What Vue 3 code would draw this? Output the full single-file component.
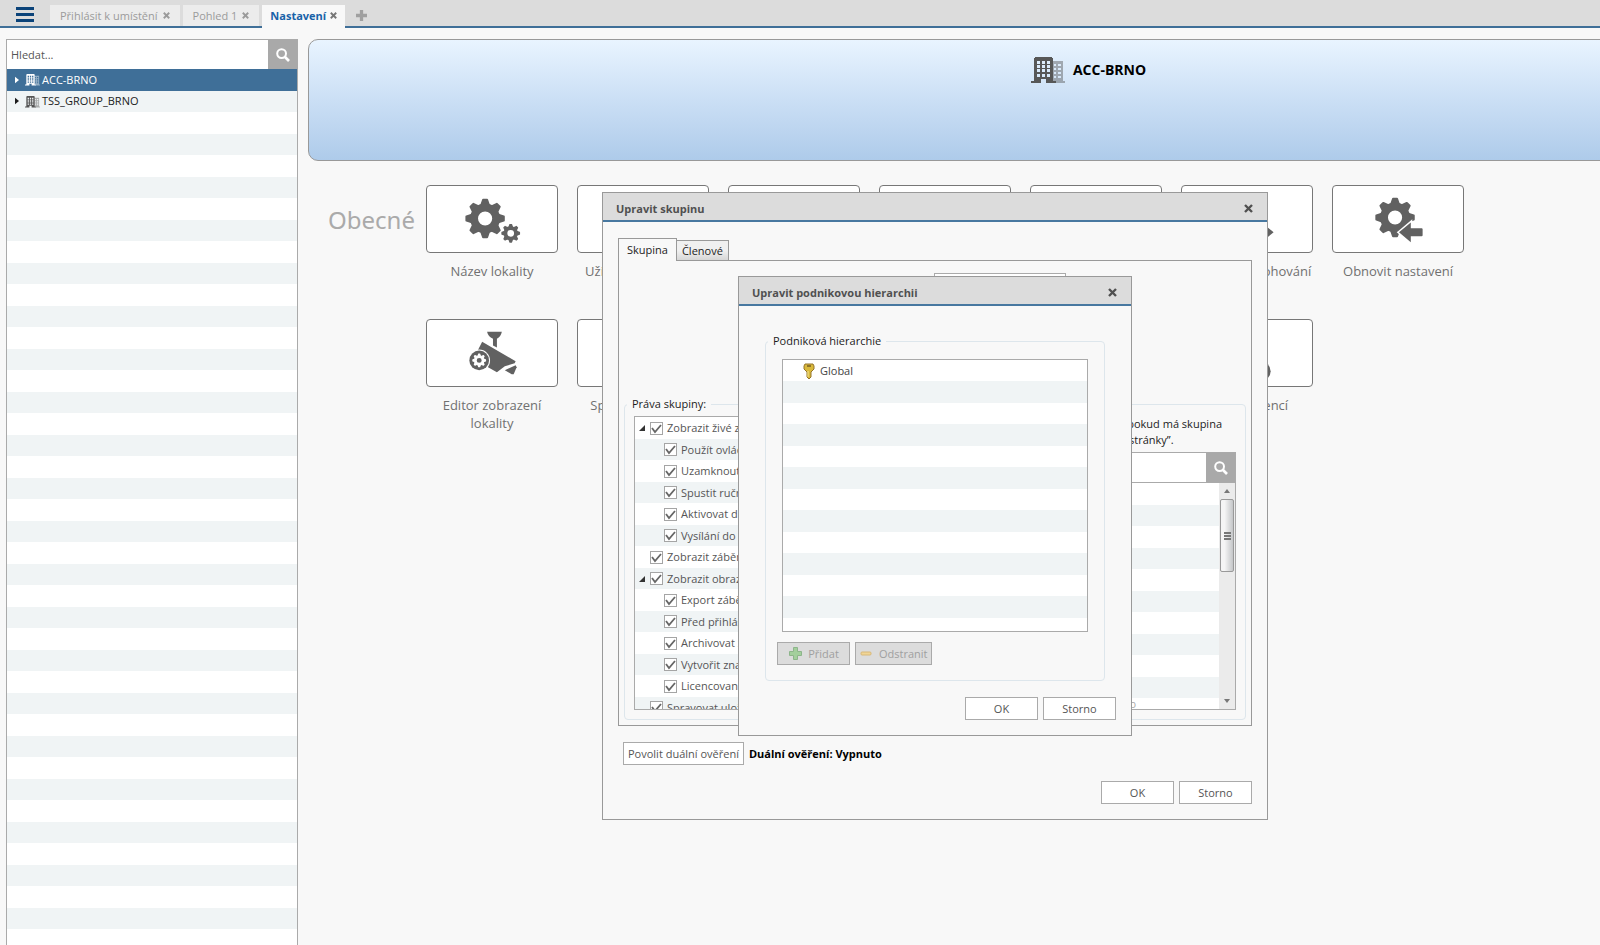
<script setup>
import { h } from 'vue'

const tabs = [
  { label: 'Přihlásit k umístění', active: false },
  { label: 'Pohled 1', active: false },
  { label: 'Nastavení', active: true },
]

const sites = [
  { name: 'ACC-BRNO', selected: true },
  { name: 'TSS_GROUP_BRNO', selected: false },
]

const tiles = [
  { label: 'Název lokality', icon: 'gears' },
  { label: 'Uživatelé a skupiny', icon: '' },
  { label: 'Podniková správa', icon: '' },
  { label: 'Upozornění', icon: '' },
  { label: 'Pravidla', icon: '' },
  { label: 'Nastavení zálohování', icon: 'backup' },
  { label: 'Obnovit nastavení', icon: 'restore' },
  { label: 'Editor zobrazení lokality', icon: 'camera' },
  { label: 'Správa nahrávání', icon: '' },
  { label: 'Externí', icon: '' },
  { label: 'Protokol', icon: '' },
  { label: 'Síť', icon: '' },
  { label: 'Správa licencí', icon: 'license' },
]

const rights = [
  { label: 'Zobrazit živé záběry', level: 0, open: true },
  { label: 'Použít ovládání PTZ', level: 1 },
  { label: 'Uzamknout ovládání', level: 1 },
  { label: 'Spustit ruční nahrávání', level: 1 },
  { label: 'Aktivovat digitální', level: 1 },
  { label: 'Vysílání do reproduktorů', level: 1 },
  { label: 'Zobrazit záběry', level: 0 },
  { label: 'Zobrazit obrazy', level: 0, open: true },
  { label: 'Export záběrů', level: 1 },
  { label: 'Před přihlášením', level: 1 },
  { label: 'Archivovat záznam', level: 1 },
  { label: 'Vytvořit značky', level: 1 },
  { label: 'Licencované hledání', level: 1 },
  { label: 'Spravovat uložené', level: 0 },
]

const Gear = (p) =>
  h('g', { transform: `translate(${p.cx} ${p.cy}) scale(${p.r / 20})` }, [
    ...[0, 45, 90, 135, 180, 225, 270, 315].map((a) =>
      h('path', {
        d: 'M-5.2-13 L-3-19.2 Q-2.8-20-2-20 H2 Q2.8-20 3-19.2 L5.2-13Z',
        transform: `rotate(${a})`,
      })
    ),
    h('circle', { r: 11.2, fill: 'none', stroke: 'currentColor', 'stroke-width': 8 }),
  ])
Gear.props = ['cx', 'cy', 'r']

const Building = () =>
  h('svg', { class: 'building', viewBox: '0 0 34 27', 'aria-hidden': 'true' }, [
    h('path', {
      opacity: 0.45,
      'fill-rule': 'evenodd',
      d: 'M22 5H32V25H34V27H25V25H22ZM23 8h2v2h-2zM27 8h3v2h-3zM23 12h2v2h-2zM27 12h3v2h-3zM23 16h2v2h-2zM27 16h3v2h-3zM23 20h2v2h-2zM27 20h3v2h-3z',
    }),
    h('path', {
      'fill-rule': 'evenodd',
      d: 'M4 1H21V2H22V25H25V27H15V23H10V27H0V25H3V2H4ZM6 5v3h3V5zM11 5v3h3V5zM16 5v3h3V5zM6 9v3h3V9zM11 9v3h3V9zM16 9v3h3V9zM6 13v3h3v-3zM11 13v3h3v-3zM16 13v3h3v-3zM6 18v3h3v-3zM11 18v3h3v-3zM16 18v3h3v-3z',
    }),
  ])

const Cross = () =>
  h('svg', { class: 'cross', viewBox: '0 0 9 9', 'aria-hidden': 'true' }, [
    h('path', { d: 'M1 1L8 8M8 1L1 8', stroke: 'currentColor', 'stroke-width': 2.4 }),
  ])

const Lens = () =>
  h('svg', { class: 'lens', viewBox: '0 0 14 14', 'aria-hidden': 'true' }, [
    h('circle', { cx: 5.6, cy: 5.6, r: 4.4, fill: 'none', stroke: 'currentColor', 'stroke-width': 2 }),
    h('path', { d: 'M9 9L13 13', stroke: 'currentColor', 'stroke-width': 2.6 }),
  ])
</script>

<template>
  <div class="app">
    <header class="topbar">
      <button class="menu" aria-label="Menu"><i></i><i></i><i></i></button>
      <nav class="tabs">
        <div v-for="t in tabs" :key="t.label" class="tab" :class="{ active: t.active }">
          <a href="#">{{ t.label }}</a>
          <button aria-label="Zavřít kartu"><Cross /></button>
        </div>
      </nav>
      <button class="add" aria-label="Nová karta">
        <svg viewBox="0 0 12 12"><path d="M6 0V12M0 6H12" stroke="currentColor" stroke-width="3.6" /></svg>
      </button>
    </header>

    <div class="body">
      <aside class="sidebar">
        <div class="search">
          <input type="text" placeholder="Hledat..." aria-label="Hledat" />
          <button aria-label="Hledat"><Lens /></button>
        </div>
        <ul class="sites striped">
          <li v-for="s in sites" :key="s.name" :class="{ selected: s.selected }">
            <svg class="caret" viewBox="0 0 5 8"><path d="M0 0L5 4L0 8Z" /></svg>
            <Building />
            <span>{{ s.name }}</span>
          </li>
        </ul>
      </aside>

      <main class="main">
        <section class="banner">
          <Building />
          <h1>ACC-BRNO</h1>
        </section>
        <section class="general">
          <h2>Obecné</h2>
          <div class="tiles">
            <div v-for="t in tiles" :key="t.label" class="tile">
              <button :aria-label="t.label">
                <svg viewBox="0 0 132 68" aria-hidden="true">
                  <template v-if="t.icon === 'gears'">
                    <Gear :cx="59" :cy="33" :r="20" />
                    <Gear :cx="85" :cy="48" :r="9.5" />
                  </template>
                  <template v-else-if="t.icon === 'restore'">
                    <Gear :cx="63" :cy="32" :r="20" />
                    <path d="M67 47L79 37V43H90Q91 43 91 44V50Q91 51 90 51H79V57Z" stroke="#fff" stroke-width="3" paint-order="stroke" />
                  </template>
                  <template v-else-if="t.icon === 'backup'">
                    <Gear :cx="63" :cy="32" :r="20" />
                    <path d="M93 47L81 37V43H70V51H81V57Z" stroke="#fff" stroke-width="3" paint-order="stroke" />
                  </template>
                  <template v-else-if="t.icon === 'license'">
                    <circle cx="80" cy="52" r="10" />
                  </template>
                  <template v-else-if="t.icon === 'camera'">
                    <path d="M61 12H76Q75 17 71 19V28L67 26V19Q62 17 61 12Z" />
                    <path d="M56 22L90 42L89 44L79 47L71 53L62 48L51 32Z" />
                    <path d="M79 51L90 46L91 48L88 55L86 55Z" />
                    <circle cx="53" cy="41" r="11" fill="#fff" />
                    <circle cx="53" cy="41" r="10" />
                    <g class="light"><Gear :cx="53" :cy="41" :r="7" /></g>
                  </template>
                </svg>
              </button>
              <span>{{ t.label }}</span>
            </div>
          </div>
        </section>
      </main>
    </div>

    <div class="overlay">
      <section class="dialog group" role="dialog" aria-label="Upravit skupinu">
        <header>
          <h3>Upravit skupinu</h3>
          <button aria-label="Zavřít"><Cross /></button>
        </header>
        <div class="group-body">
          <div class="page-tabs">
            <button class="current">Skupina</button>
            <button>Členové</button>
          </div>
          <div class="page">
            <button class="edit" aria-label="Upravit hierarchii"></button>
            <fieldset class="rights">
              <legend>Práva skupiny:</legend>
              <ul class="tree striped">
                <li v-for="r in rights" :key="r.label" :class="{ child: r.level }">
                  <span class="twist"><svg v-if="r.open" viewBox="0 0 7 7"><path d="M7 0V7H0Z" /></svg></span>
                  <label>
                    <span class="check">
                      <input type="checkbox" checked />
                      <svg viewBox="0 0 13 13"><path d="M2 6L5 10L11 3" fill="none" stroke="#666" stroke-width="1.8" /></svg>
                    </span>
                    {{ r.label }}
                  </label>
                </li>
              </ul>
              <div class="access">
                <p>Přístup je povolen, pokud má skupina<br />též právo „Zobrazit stránky”.</p>
                <div class="search">
                  <input type="text" aria-label="Hledat zařízení" />
                  <button aria-label="Hledat zařízení"><Lens /></button>
                </div>
                <div class="devices">
                  <div class="striped device-list"><span>Zobrazení lokality Brno</span></div>
                  <div class="scroll">
                    <svg viewBox="0 0 6 4"><path d="M3 0L6 4H0Z" /></svg>
                    <div class="thumb"><i></i><i></i><i></i></div>
                    <svg viewBox="0 0 6 4"><path d="M0 0H6L3 4Z" /></svg>
                  </div>
                </div>
              </div>
            </fieldset>
          </div>
          <div class="dual">
            <button class="btn">Povolit duální ověření</button>
            <strong>Duální ověření: Vypnuto</strong>
          </div>
          <footer>
            <button class="btn">OK</button>
            <button class="btn">Storno</button>
          </footer>
        </div>
      </section>

      <section class="dialog hierarchy" role="dialog" aria-label="Upravit podnikovou hierarchii">
        <header>
          <h3>Upravit podnikovou hierarchii</h3>
          <button aria-label="Zavřít"><Cross /></button>
        </header>
        <div class="hierarchy-body">
          <fieldset>
            <legend>Podniková hierarchie</legend>
            <ul class="ranks">
              <li>
                <svg class="key" viewBox="0 0 12 16">
                  <path d="M2 1H10L11 3V6L8 9V14L6 16L4 14V9L1 6V3Z" fill="#d9b93c" stroke="#94742a" />
                  <path d="M4 3H8" stroke="#6d5520" stroke-width="1.4" />
                  <path d="M5 8V14" stroke="#f7e793" />
                </svg>
                Global
              </li>
            </ul>
            <div class="actions">
              <button class="btn" disabled>
                <svg viewBox="0 0 13 13"><path d="M4.500 .5H8.500V4.500H12.500V8.500H8.500V12.500H4.500V8.500H.5V4.500H4.500Z" fill="#a3cf9c" stroke="#8db58a" /></svg>
                Přidat
              </button>
              <button class="btn" disabled>
                <svg viewBox="0 0 13 13"><rect x="1" y="5" width="10" height="3" rx="1" fill="#f0d596" stroke="#d8b878" /></svg>
                Odstranit
              </button>
            </div>
          </fieldset>
          <footer>
            <button class="btn">OK</button>
            <button class="btn">Storno</button>
          </footer>
        </div>
      </section>
    </div>
  </div>
</template>

<style>
body {
  margin: 0;
}
</style>

<style scoped>
.app {
  position: relative;
  display: flex;
  flex-direction: column;
  height: 100vh;
  overflow: hidden;
  background: #f8f8f8;
  color: #1c1c1c;
  font: 11px/16px "Open Sans", "Noto Sans", sans-serif;
}
.app :deep(*) {
  box-sizing: border-box;
}
button,
input {
  font: inherit;
  color: inherit;
}
button {
  padding: 0;
  border: 0;
  background: none;
}
h1,
h2,
h3,
p,
ul {
  margin: 0;
  padding: 0;
}
li {
  list-style: none;
}
:deep(svg) {
  display: block;
  flex: none;
  fill: currentColor;
}
:deep(.cross) {
  width: 9px;
  height: 9px;
}
:deep(.lens) {
  width: 14px;
  height: 14px;
}
.striped {
  background: repeating-linear-gradient(#fff 0 22px, #f0f4f5 22px 43px);
}

.topbar {
  display: flex;
  align-items: flex-end;
  height: 28px;
  background: linear-gradient(#dcdcdc 26px, #3f6f98 26px);
}
.menu {
  display: flex;
  flex-direction: column;
  gap: 3px;
  width: 18px;
  margin: 0 16px 6px;
}
.menu i {
  height: 3px;
  background: #0b4379;
}
.tabs {
  display: flex;
  align-items: flex-end;
  gap: 3px;
}
.tab {
  display: flex;
  align-items: center;
  gap: 5px;
  height: 21px;
  margin-bottom: 2px;
  padding: 0 10px;
  background: #ececec;
  color: #9b9b9b;
}
.tab a {
  color: inherit;
  text-decoration: none;
}
.tab :deep(.cross) {
  width: 7px;
  height: 7px;
}
.tab.active {
  gap: 4px;
  height: 23px;
  margin-bottom: 0;
  padding: 0 8px 2px;
  background: #f8f8f8;
  color: #777;
}
.tab.active a {
  color: #1862a8;
  font-weight: 700;
}
.add {
  margin: 0 11px 7px;
  color: #a0a0a0;
}
.add svg {
  width: 11px;
  height: 11px;
}

.body {
  display: flex;
  flex: 1;
  min-height: 0;
}
.sidebar {
  display: flex;
  flex-direction: column;
  width: 292px;
  margin: 11px 10px 0 6px;
  border: 1px solid #aaa;
  border-bottom: 0;
}
.search {
  display: flex;
  height: 29px;
}
.search input {
  flex: 1;
  min-width: 0;
  padding: 0 4px;
  border: 0;
  background: #fff;
}
.search input::placeholder {
  color: #555;
  opacity: 1;
}
.search button {
  display: grid;
  place-items: center;
  width: 29px;
  background: #a9a9a9;
  color: #fff;
}
.sites {
  flex: 1;
}
.sites li {
  display: flex;
  align-items: center;
  height: 21px;
  padding: 0 8px 1px;
}
.sites li:nth-child(odd) {
  height: 22px;
}
.sites li.selected {
  background: #3f6f98;
  color: #fff;
}
.sites .caret {
  width: 4px;
  height: 8px;
  margin-right: 6px;
}
.sites :deep(.building) {
  width: 15px;
  height: 13px;
  margin-right: 2px;
}
.sites li:not(.selected) :deep(.building) {
  color: #555;
}

.main {
  flex: 1;
  min-width: 0;
  overflow: hidden;
  padding-top: 11px;
}
.banner {
  display: flex;
  justify-content: center;
  gap: 8px;
  height: 122px;
  margin-right: -269px;
  padding-top: 16px;
  border: 1px solid #999;
  border-radius: 10px;
  background: linear-gradient(#e9f4ff, #cbdff5 50%, #aecbea);
}
.banner :deep(.building) {
  width: 34px;
  height: 27px;
  color: #575757;
}
.banner h1 {
  color: #000;
  font-size: 14px;
  line-height: 28px;
}
.general {
  display: flex;
  padding: 24px 0 0 20px;
}
.general h2 {
  width: 98px;
  color: #aaa;
  font-family: "Noto Sans", "Open Sans", sans-serif;
  font-size: 24px;
  font-weight: 400;
  line-height: 70px;
}
.tiles {
  flex: 1;
  display: grid;
  grid-template-columns: repeat(auto-fill, 132px);
  gap: 28px 19px;
}
.tile {
  display: flex;
  flex-direction: column;
  align-items: center;
  min-height: 106px;
  color: #707070;
  font-size: 13px;
  line-height: 18px;
  text-align: center;
}
.tile button {
  width: 100%;
  height: 68px;
  margin-bottom: 9px;
  border: 1px solid #777;
  border-radius: 4px;
  background: #fff;
  color: #616161;
}
.tile svg {
  width: 100%;
}
.tile .light {
  color: #fff;
  fill: #fff;
}

.overlay {
  position: absolute;
  inset: 67px 0 0 270px;
  display: grid;
  place-items: center;
}
.dialog {
  grid-area: 1 / 1;
  border: 1px solid #999;
  background: #f8f8f8;
}
.dialog header {
  display: flex;
  align-items: center;
  justify-content: space-between;
  height: 29px;
  padding: 4px 14px 0 13px;
  border-bottom: 2px solid #4878a0;
  background: #dcdcdc;
  color: #505050;
}
.dialog h3 {
  font-size: 11px;
}
.group {
  width: 666px;
}
.group-body {
  padding: 16px 15px 15px;
}
.page-tabs {
  display: flex;
  align-items: flex-end;
}
.page-tabs button {
  height: 20px;
  padding: 0 5px;
  border: 1px solid #999;
  border-width: 1px 1px 0 0;
  background: linear-gradient(#f0f0f0 50%, #d6d6d6);
}
.page-tabs .current {
  z-index: 1;
  height: 23px;
  margin-bottom: -1px;
  padding: 0 8px;
  border-left-width: 1px;
  background: #f8f8f8;
}
.page {
  padding: 12px 5px 5px;
  border: 1px solid #999;
}
.edit {
  display: block;
  width: 132px;
  height: 22px;
  margin: 0 auto 101px 310px;
  border: 1px solid #aaa;
  background: #fff;
}
fieldset {
  min-width: 0;
  margin: 0;
  border: 1px solid #dde6ec;
  border-radius: 4px;
}
legend {
  padding: 0 5px;
}
.rights {
  display: grid;
  grid-template-columns: 1fr 1fr;
  gap: 12px;
  padding: 4px 9px 9px;
}
.rights legend {
  margin-left: -7px;
}
.tree {
  height: 294px;
  overflow: hidden;
  border: 1px solid #aaa;
  color: #555;
}
.tree li {
  display: flex;
  align-items: center;
  height: 21px;
  padding-left: 4px;
}
.tree li:nth-child(odd) {
  height: 22px;
}
.tree li.child {
  padding-left: 18px;
}
.twist {
  width: 11px;
  color: #333;
}
.twist svg {
  width: 6px;
  height: 6px;
}
.tree label {
  display: flex;
  align-items: center;
  gap: 4px;
  white-space: nowrap;
}
.check {
  display: grid;
}
.check input,
.check svg {
  grid-area: 1 / 1;
  width: 13px;
  height: 13px;
  margin: 0;
}
.check input {
  appearance: none;
  border: 1px solid #a5a5a5;
  background: #fff;
}
.access {
  display: flex;
  flex-direction: column;
  min-width: 0;
}
.access p {
  align-self: flex-end;
  margin-bottom: 4px;
  padding-right: 14px;
}
.access .search {
  height: 31px;
  border: 1px solid #aaa;
}
.devices {
  display: flex;
  flex: 1;
  border: 1px solid #aaa;
  border-top: 0;
}
.device-list {
  display: flex;
  flex: 1;
  align-items: flex-end;
  justify-content: flex-end;
  padding-right: 83px;
  overflow: hidden;
  color: #aaa;
  line-height: 10px;
}
.scroll {
  display: flex;
  flex-direction: column;
  align-items: center;
  width: 16px;
  padding: 6px 0;
  background: #ebebeb;
  color: #777;
}
.scroll svg {
  width: 6px;
  height: 4px;
}
.thumb {
  display: flex;
  flex-direction: column;
  align-items: center;
  justify-content: center;
  gap: 1px;
  width: 14px;
  height: 73px;
  margin: 6px 0 auto;
  border: 1px solid #999;
  border-radius: 2px;
  background: linear-gradient(90deg, #f5f5f5 30%, #c4c6c8);
}
.thumb i {
  width: 7px;
  height: 2px;
  background: #777;
}
.btn {
  display: flex;
  align-items: center;
  justify-content: center;
  min-width: 73px;
  height: 23px;
  padding-top: 1px;
  border: 1px solid #aaa;
  background: #fff;
  color: #555;
}
.dual {
  display: flex;
  align-items: center;
  gap: 5px;
  padding: 16px 0 16px 5px;
  color: #000;
}
.dual .btn {
  padding: 0 4px;
}
footer {
  display: flex;
  justify-content: flex-end;
  gap: 5px;
}

.hierarchy {
  width: 394px;
}
.hierarchy-body {
  padding: 27px 15px 15px;
}
.hierarchy fieldset {
  margin: 0 11px 16px;
  padding: 10px 16px 15px;
}
.hierarchy legend {
  margin-left: -14px;
}
.ranks {
  height: 273px;
  border: 1px solid #aaa;
  background: repeating-linear-gradient(#fff 0 21px, #f0f4f5 21px 43px);
  color: #444;
}
.ranks li {
  display: flex;
  align-items: center;
  gap: 5px;
  height: 22px;
  padding-left: 20px;
}
.key {
  width: 12px;
  height: 16px;
}
.actions {
  display: flex;
  gap: 5px;
  margin: 10px 0 0 -5px;
}
.actions .btn {
  gap: 6px;
  padding: 0 3px 0 4px;
  background: #dcdcdc;
  color: #a0a0a0;
}
.actions svg {
  width: 13px;
  height: 13px;
}
</style>
